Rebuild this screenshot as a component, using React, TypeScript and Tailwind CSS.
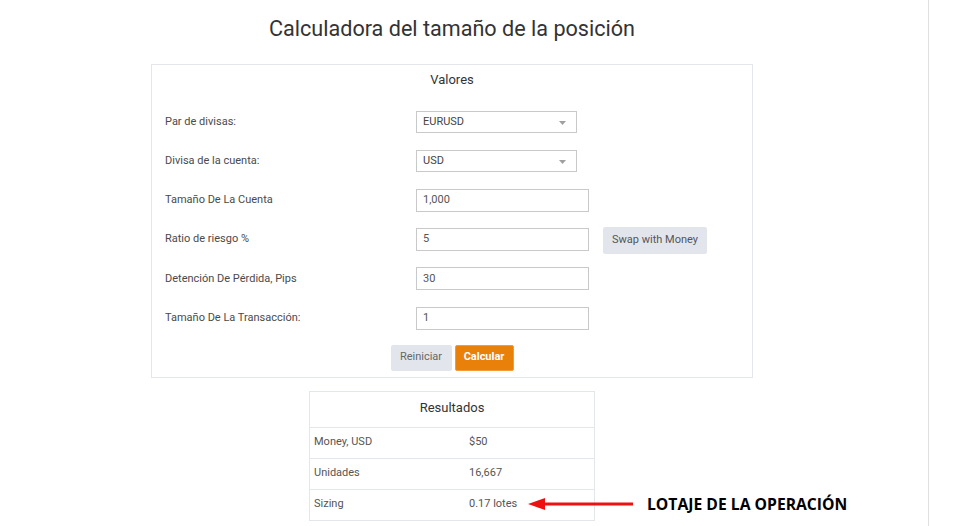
import React from "react";

const font = { fontFamily: "Roboto, 'Liberation Sans', sans-serif" };

function Caret() {
  return (
    <svg width="7" height="4" viewBox="0 0 7 4" className="absolute right-[10px] top-[9px]">
      <path d="M0 0h7L3.5 4z" fill="#a0a0a0" />
    </svg>
  );
}

function SelectBox({ value }: { value: string }) {
  return (
    <div className="relative flex h-[22px] w-[161px] items-center border border-[#c9c9c9] bg-white pl-[6px] text-[11px] text-[#444]">
      {value}
      <Caret />
    </div>
  );
}

function TextBox({ value }: { value: string }) {
  return (
    <div className="flex h-[23px] w-[173px] items-center border border-[#c9c9c9] bg-white pl-[6px] text-[11px] text-[#555]">
      {value}
    </div>
  );
}

const rows: { label: string; field: React.ReactNode; extra?: React.ReactNode }[] = [
  { label: "Par de divisas:", field: <SelectBox value="EURUSD" /> },
  { label: "Divisa de la cuenta:", field: <SelectBox value="USD" /> },
  { label: "Tamaño De La Cuenta", field: <TextBox value="1,000" /> },
  {
    label: "Ratio de riesgo %",
    field: <TextBox value="5" />,
    extra: (
      <button className="ml-[14px] mt-[2px] h-[27px] w-[104px] rounded-[2px] bg-[#e2e6ec] text-[11px] text-[#555]">
        Swap with Money
      </button>
    ),
  },
  { label: "Detención De Pérdida, Pips", field: <TextBox value="30" /> },
  { label: "Tamaño De La Transacción:", field: <TextBox value="1" /> },
];

const results = [
  ["Money, USD", "$50"],
  ["Unidades", "16,667"],
  ["Sizing", "0.17 lotes"],
];

export default function App() {
  return (
    <div className="flex min-h-[526px] bg-white" style={font}>
      <div className="w-[929px] border-r border-[#e0e0e0]">
        <div className="w-[904px]">
          <h1 className="pt-[15px] text-center text-[21.6px] leading-[28px] text-[#333]">
            Calculadora del tamaño de la posición
          </h1>

          <div className="mx-auto mt-[21px] w-[602px] border border-[#e3e6ea]">
            <div className="h-[37.5px] pt-[7px] text-center text-[13px] leading-[16px] text-[#333]">
              Valores
            </div>
            <div className="pl-[13px]">
              {rows.map((r) => (
                <div key={r.label} className="flex h-[39.2px] items-center">
                  <div className="w-[251px] text-[11px] text-[#4a4a4a]">{r.label}</div>
                  {r.field}
                  {r.extra}
                </div>
              ))}
            </div>
            <div className="mt-[7px] flex justify-center gap-[3px] pb-[6px]">
              <button className="h-[26px] w-[61px] rounded-[2px] bg-[#e2e6ec] text-[11px] text-[#666]">
                Reiniciar
              </button>
              <button className="h-[26px] w-[59px] rounded-[2px] border border-[#f39a3a] bg-[#e8800a] text-[11px] font-bold text-white">
                Calcular
              </button>
            </div>
          </div>

          <div className="relative mx-auto mt-[13px] w-[286px]">
            <div className="border border-[#e3e6ea]">
              <div className="flex h-[35px] items-center justify-center pb-[2px] text-[13px] text-[#333]">
                Resultados
              </div>
              {results.map(([k, v]) => (
                <div key={k} className="flex h-[31px] items-center border-t border-[#e3e6ea] pl-[4px] text-[11px] text-[#555]">
                  <div className="w-[155px]">{k}</div>
                  <div>{v}</div>
                </div>
              ))}
            </div>

            <div className="absolute left-[218px] top-[102px] flex items-center">
              <svg width="108" height="14" viewBox="0 0 108 14">
                <path d="M17 5.6H106v2.8H17z" fill="#ee1111" />
                <path d="M1 7L18 1v12z" fill="#ee1111" />
              </svg>
              <span
                className="ml-[12px] whitespace-nowrap text-[15.7px] font-bold text-black"
                style={{ fontFamily: "'Open Sans', sans-serif" }}
              >
                LOTAJE DE LA OPERACIÓN
              </span>
            </div>
          </div>
        </div>
      </div>
    </div>
  );
}
